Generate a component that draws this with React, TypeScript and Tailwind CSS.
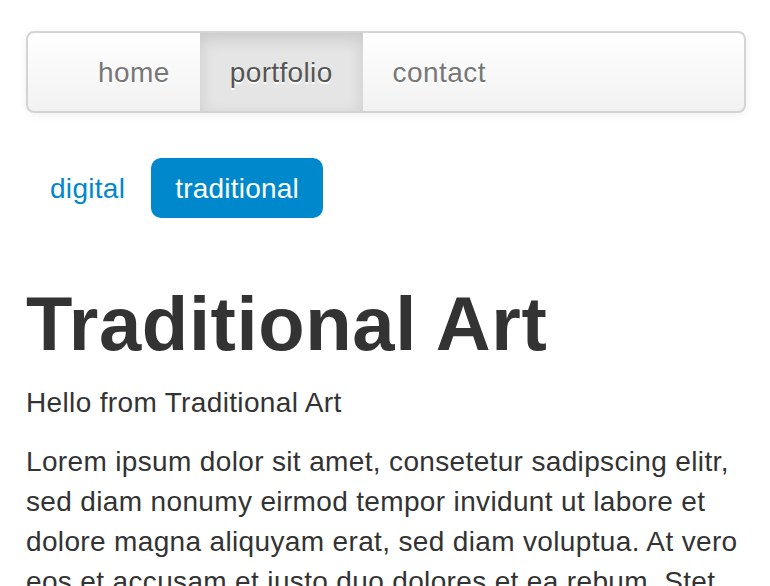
export default function App() {
  return (
    <div
      className="h-[586px] overflow-hidden bg-white pl-[26px] pt-[31px] text-[#333]"
      style={{ fontFamily: '"Liberation Sans", Arial, Helvetica, sans-serif' }}
    >
      <div className="w-[720px]">
        <nav className="h-[82px] rounded-[8px] border-2 border-[#d4d4d4] bg-gradient-to-b from-[#ffffff] to-[#f2f2f2] pl-[40px] shadow-[0_2px_8px_rgba(0,0,0,0.065)]">
          <ul className="flex h-full">
            {[
              { label: "home", active: false },
              { label: "portfolio", active: true },
              { label: "contact", active: false },
            ].map((item) => (
              <li key={item.label} className="h-full">
                <a
                  className={
                    item.active
                      ? "block h-full bg-[#e5e5e5] px-[30px] pt-[20px] pb-[18px] text-[28px] leading-[40px] tracking-[0.35px] text-[#555] shadow-[inset_0_6px_16px_rgba(0,0,0,0.125)] [text-shadow:0_2px_0_#fff]"
                      : "block h-full px-[30px] pt-[20px] pb-[18px] text-[28px] leading-[40px] tracking-[0.45px] text-[#777] [text-shadow:0_2px_0_#fff]"
                  }
                >
                  {item.label}
                </a>
              </li>
            ))}
          </ul>
        </nav>

        <ul className="mt-[45px] flex">
          <li>
            <a className="mr-[2px] block rounded-[10px] px-[24px] pt-[17px] pb-[15px] text-[28px] leading-[28px] tracking-[0.3px] text-[#0088cc]">
              digital
            </a>
          </li>
          <li>
            <a className="block rounded-[10px] bg-[#0088cc] px-[24px] pt-[17px] pb-[15px] text-[28px] leading-[28px] tracking-[0.2px] text-white">
              traditional
            </a>
          </li>
        </ul>

        <h1 className="mt-[68px] text-[76px] font-bold leading-[76px] tracking-[0.6px] text-[#333]">
          Traditional Art
        </h1>
        <p className="mt-[21px] text-[28px] leading-[40px] tracking-[0.35px]">
          Hello from Traditional Art
        </p>
        <p className="mt-[19px] text-[28px] leading-[40px] tracking-[0.35px]">
          Lorem ipsum dolor sit amet, consetetur sadipscing elitr, sed diam nonumy eirmod tempor
          invidunt ut labore et dolore magna aliquyam erat, sed diam voluptua. At vero eos et
          accusam et justo duo dolores et ea rebum. Stet clita kasd gubergren, no sea takimata
          sanctus est Lorem ipsum dolor sit amet.
        </p>
      </div>
    </div>
  );
}
